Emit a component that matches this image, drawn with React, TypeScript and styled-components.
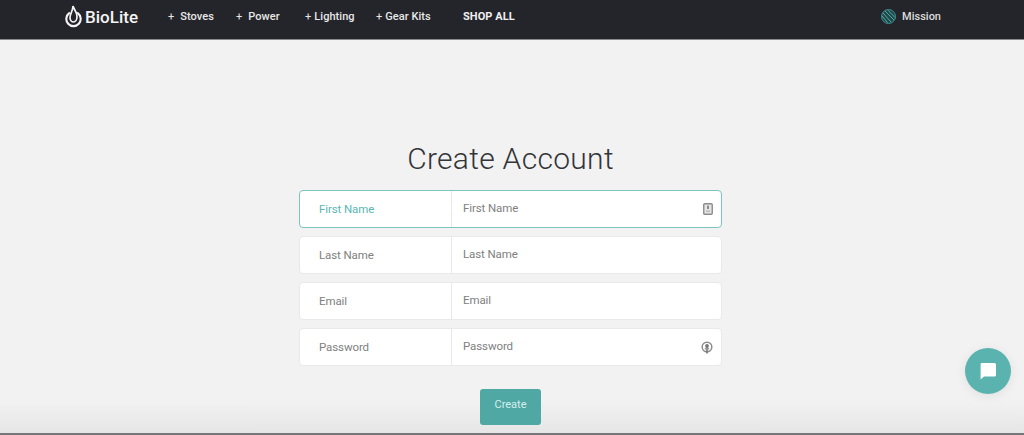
import React from "react";
import styled, { createGlobalStyle } from "styled-components";

const Global = createGlobalStyle`
  html, body { margin: 0; padding: 0; height: 435px; overflow: hidden; background: #f2f2f2; }
  * { box-sizing: border-box; }
  body { font-family: Roboto, "Liberation Sans", sans-serif; }
`;

const Page = styled.div`
  position: relative;
  height: 435px;
  display: flex;
  flex-direction: column;
  background: #f2f2f2;
  overflow: hidden;
`;

const Header = styled.header`
  height: 40px;
  flex: none;
  display: flex;
  align-items: center;
  padding: 0 83px 6px 65px;
  background: #24252a;
  border-bottom: 1px solid #8a8b8d;
`;

const Logo = styled.div`
  display: flex;
  align-items: center;
  gap: 3px;
  width: 103px;
  color: #f4f4f4;
  font-size: 17px;
  font-weight: 500;
`;

const Nav = styled.nav`
  display: flex;
  align-items: center;
  flex: 1;
  color: #e8e8e8;
  font-size: 11px;
  font-weight: 500;
  letter-spacing: 0.05px;
`;

const NavItem = styled.span<{ $w: number; $gap: number }>`
  display: flex;
  width: ${(p) => p.$w}px;
  gap: ${(p) => p.$gap}px;
  white-space: nowrap;
`;

const Plus = styled.span`
  font-weight: 400;
`;

const ShopAll = styled.span`
  font-size: 11px;
  font-weight: 700;
  color: #f0f0f0;
  white-space: nowrap;
`;

const Mission = styled.div`
  display: flex;
  align-items: center;
  gap: 6px;
  color: #dcdcdc;
  font-size: 11px;
  font-weight: 500;
`;

const Main = styled.main`
  flex: 1;
  display: flex;
  flex-direction: column;
  align-items: center;
  padding: 98px 3px 0 0;
  background: linear-gradient(to bottom, #f2f2f2 0, #f2f2f2 360px, #e6e6e6 393px);
  border-bottom: 2px solid #75757a;
`;

const Title = styled.h1`
  margin: 0 0 11px;
  height: 41px;
  line-height: 41px;
  font-size: 30px;
  font-weight: 300;
  color: #333538;
  letter-spacing: 0.3px;
`;

const Form = styled.form`
  width: 423px;
  display: flex;
  flex-direction: column;
  gap: 8px;
`;

const Row = styled.div<{ $active?: boolean }>`
  height: 38px;
  display: grid;
  grid-template-columns: 152px 1fr;
  background: #fff;
  border: 1px solid ${(p) => (p.$active ? "#7cc4c1" : "#e9e9e9")};
  border-radius: 4px;
`;

const Label = styled.label<{ $active?: boolean }>`
  display: flex;
  align-items: center;
  padding: 0 0 1px 19px;
  border-right: 1px solid #e8e8e8;
  font-size: 11.5px;
  letter-spacing: -0.1px;
  color: ${(p) => (p.$active ? "#5ab7b3" : "#808080")};
`;

const Field = styled.div`
  display: flex;
  align-items: center;
  justify-content: space-between;
  padding: 0 8px 3px 11px;
  font-size: 11.5px;
  letter-spacing: -0.1px;
  color: #808080;
`;

const IconSlot = styled.span`
  display: flex;
  margin-top: 3px;
`;

const CreateButton = styled.button`
  margin-top: 23px;
  width: 61px;
  height: 36px;
  padding: 0 0 5px;
  border: none;
  border-radius: 3px;
  background: #4fa8a4;
  color: #d6efed;
  font-family: inherit;
  font-size: 11px;
`;

const Chat = styled.div`
  position: absolute;
  left: 965px;
  top: 348px;
  width: 46px;
  height: 46px;
  border-radius: 50%;
  background: #5bb3b0;
  display: flex;
  align-items: center;
  justify-content: center;
  box-shadow: 0 2px 12px rgba(0, 0, 0, 0.08);
`;

const rows = [
  { name: "First Name", active: true, icon: "card" },
  { name: "Last Name" },
  { name: "Email" },
  { name: "Password", icon: "key" },
];

const CardIcon = () => (
  <svg width="10" height="12" viewBox="0 0 10 12">
    <rect x="0.75" y="0.75" width="8.5" height="10.5" rx="1" fill="#e6e6e6" stroke="#8c8c8c" strokeWidth="1.4" />
    <rect x="4.2" y="2.6" width="1.6" height="3.4" fill="#777" />
    <rect x="3" y="7.4" width="4" height="1.6" fill="#bbb" />
  </svg>
);

const KeyIcon = () => (
  <svg width="12" height="13" viewBox="0 0 12 13">
    <circle cx="6" cy="6" r="4.8" fill="none" stroke="#8c8c8c" strokeWidth="1.5" />
    <circle cx="6" cy="5" r="1.9" fill="#777" />
    <rect x="5.2" y="6" width="1.6" height="6.5" fill="#777" />
    <rect x="3.8" y="7" width="4.4" height="1.5" fill="#999" />
  </svg>
);

const FlameLogo = () => (
  <svg width="17" height="23" viewBox="0 0 17 23" fill="none" stroke="#f4f4f4" strokeLinecap="round">
    <path d="M4.2 8.2 A7.2 7.2 0 1 0 12.8 8.2" strokeWidth="2.1" />
    <path d="M8 1 C8.5 4 12 6.5 12 11.5 C12 15 10.2 17 8.5 17 C6.8 17 5 15.2 5 12.5 C5 9 8 5.5 8 1 Z" strokeWidth="1.7" />
  </svg>
);

const Globe = () => (
  <svg width="15" height="15" viewBox="0 0 15 15" fill="none">
    <circle cx="7.5" cy="7.5" r="7" fill="#1f4a4c" stroke="#3f8f8d" strokeWidth="1" />
    <path d="M2 4 L10 13 M4 2 L13 11 M7 1.2 L14 8.5 M1 7 L6.5 13.5" stroke="#5fb0ad" strokeWidth="0.9" />
  </svg>
);

const Bubble = () => (
  <svg width="18" height="18" viewBox="0 0 18 18">
    <path d="M2.5 1 H15.5 A1.5 1.5 0 0 1 17 2.5 V13 A1.5 1.5 0 0 1 15.5 14.5 H5 L1.6 17.6 V2.5 A1.5 1.5 0 0 1 2.5 1 Z" fill="#fff" />
  </svg>
);

export default function App() {
  return (
    <Page>
      <Global />
      <Header>
        <Logo>
          <FlameLogo />
          <span>BioLite</span>
        </Logo>
        <Nav>
          <NavItem $w={68} $gap={6}><Plus>+</Plus>Stoves</NavItem>
          <NavItem $w={69} $gap={6}><Plus>+</Plus>Power</NavItem>
          <NavItem $w={71} $gap={3}><Plus>+</Plus>Lighting</NavItem>
          <NavItem $w={87} $gap={3}><Plus>+</Plus>Gear Kits</NavItem>
          <ShopAll>SHOP ALL</ShopAll>
        </Nav>
        <Mission>
          <Globe />
          <span>Mission</span>
        </Mission>
      </Header>
      <Main>
        <Title>Create Account</Title>
        <Form>
          {rows.map((r) => (
            <Row key={r.name} $active={r.active}>
              <Label $active={r.active}>{r.name}</Label>
              <Field>
                <span>{r.name}</span>
                {r.icon && <IconSlot>{r.icon === "card" ? <CardIcon /> : <KeyIcon />}</IconSlot>}
              </Field>
            </Row>
          ))}
        </Form>
        <CreateButton type="button">Create</CreateButton>
      </Main>
      <Chat>
        <Bubble />
      </Chat>
    </Page>
  );
}
